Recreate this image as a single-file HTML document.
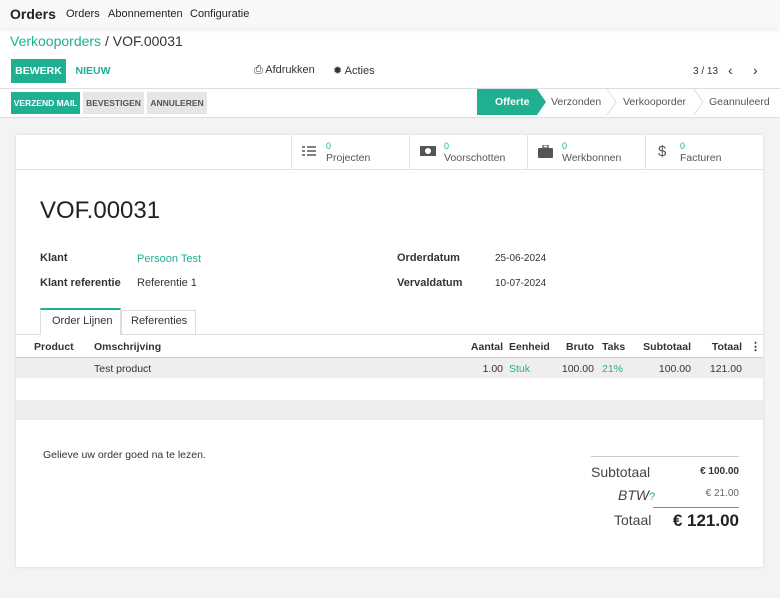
<!DOCTYPE html>
<html><head><meta charset="utf-8"><style>
*{box-sizing:border-box;margin:0;padding:0}
body{width:780px;height:598px;background:#f3f3f3;font-family:"Liberation Sans",sans-serif;font-size:11px;color:#333;position:relative;overflow:hidden}
.a{position:absolute;white-space:nowrap}
.r{position:absolute;white-space:nowrap;text-align:right}
.teal{color:#1fb092}
.nav{position:absolute;left:0;top:0;width:780px;height:28px;background:#f8f8f8;box-shadow:0 2px 4px rgba(0,0,0,.08);z-index:2}
.cp{position:absolute;left:0;top:28px;width:780px;height:90px;background:#fff;border-bottom:1px solid #ddd}
.btn{position:absolute;font-size:9.5px;font-weight:bold;height:22px;line-height:22px;text-align:center}
.sheet{position:absolute;left:16px;top:135px;width:747px;height:432px;background:#fff;box-shadow:0 0 3px rgba(0,0,0,.12)}
.sb{position:absolute;top:0;height:34px;border-left:1px solid #e2e2e2;width:118px}
.sb .n{position:absolute;left:34px;top:6px;font-size:9px;color:#1fb092}
.sb .l{position:absolute;left:34px;top:17px;font-size:10.5px;color:#555}
.sb svg{position:absolute;left:10px;top:10px}
.t{font-size:10.5px}
</style></head><body>
<div class="nav">
<span class="a" style="left:10px;top:6px;font-size:14px;font-weight:bold;color:#222">Orders</span>
<span class="a" style="left:66px;top:8px;font-size:11px;color:#222">Orders</span>
<span class="a" style="left:108px;top:8px;font-size:11px;color:#222">Abonnementen</span>
<span class="a" style="left:190px;top:8px;font-size:11px;color:#222">Configuratie</span>
</div>
<div class="cp">
<span class="a" style="left:10px;top:5px;font-size:14px"><span class="teal">Verkooporders</span> / VOF.00031</span>
<div class="btn" style="left:11px;top:31px;width:55px;height:24px;line-height:24px;background:#1fb092;color:#fff;font-size:10.5px">BEWERK</div>
<div class="btn" style="left:70px;top:31px;width:46px;height:24px;line-height:24px;color:#1fb092;font-size:10.5px">NIEUW</div>
<span class="a" style="left:254px;top:36px;font-size:11px">⎙ Afdrukken</span>
<span class="a" style="left:333px;top:36px;font-size:11px">✹ Acties</span>
<span class="a" style="left:693px;top:38px;font-size:10px">3 / 13</span>
<span class="a" style="left:728px;top:34px;font-size:14px">‹</span>
<span class="a" style="left:753px;top:34px;font-size:14px">›</span>
<div style="position:absolute;left:0;top:60px;width:780px;border-top:1px solid #ddd"></div>
<div class="btn" style="left:11px;top:64px;width:69px;background:#1fb092;color:#fff;font-size:8.5px">VERZEND MAIL</div>
<div class="btn" style="left:83px;top:64px;width:61px;background:#e6e6e6;color:#555;font-size:8.5px">BEVESTIGEN</div>
<div class="btn" style="left:147px;top:64px;width:60px;background:#e6e6e6;color:#555;font-size:8.5px">ANNULEREN</div>
<svg class="a" style="left:477px;top:61px" width="303" height="27"><polygon points="0,0 60,0 69,13 60,26 0,26" fill="#1fb092"/><polyline points="130,0 139,13 130,26" fill="none" stroke="#ddd"/><polyline points="217,0 226,13 217,26" fill="none" stroke="#ddd"/></svg>
<span class="a" style="left:495px;top:68px;color:#fff;font-weight:bold;font-size:10.5px">Offerte</span>
<span class="a" style="left:551px;top:68px;color:#555;font-size:10.5px">Verzonden</span>
<span class="a" style="left:623px;top:68px;color:#555;font-size:10.5px">Verkooporder</span>
<span class="a" style="left:709px;top:68px;color:#555;font-size:10.5px">Geannuleerd</span>
</div>
<div class="sheet">
<div style="position:absolute;left:0;top:34px;width:747px;border-top:1px solid #e2e2e2"></div>
<div class="sb" style="left:275px"><svg width="14" height="12"><path d="M0 2h3M0 6h3M0 10h3M5 2h9M5 6h9M5 10h9" stroke="#555" stroke-width="1.5"/></svg><span class="n">0</span><span class="l">Projecten</span></div>
<div class="sb" style="left:393px"><svg width="16" height="12"><rect x="0" y="1" width="16" height="10" fill="#555"/><circle cx="8" cy="6" r="3" fill="#fff"/></svg><span class="n">0</span><span class="l">Voorschotten</span></div>
<div class="sb" style="left:511px"><svg width="15" height="13"><rect x="5" y="0" width="5" height="3" fill="none" stroke="#555" stroke-width="1.3"/><rect x="0" y="3" width="15" height="10" rx="1" fill="#555"/></svg><span class="n">0</span><span class="l">Werkbonnen</span></div>
<div class="sb" style="left:629px"><span class="a" style="left:12px;top:8px;font-size:15px;color:#555">$</span><span class="n">0</span><span class="l">Facturen</span></div>
<span class="a" style="left:24px;top:62px;font-size:24px;color:#222">VOF.00031</span>
<span class="a" style="left:24px;top:117px;font-weight:bold">Klant</span>
<span class="a teal" style="left:121px;top:118px">Persoon Test</span>
<span class="a" style="left:24px;top:142px;font-weight:bold">Klant referentie</span>
<span class="a" style="left:121px;top:142px">Referentie 1</span>
<span class="a" style="left:381px;top:117px;font-weight:bold">Orderdatum</span>
<span class="a" style="left:479px;top:118px;font-size:10px">25-06-2024</span>
<span class="a" style="left:381px;top:142px;font-weight:bold">Vervaldatum</span>
<span class="a" style="left:479px;top:143px;font-size:10px">10-07-2024</span>
<div style="position:absolute;left:24px;top:173px;width:81px;height:27px;border:1px solid #ddd;border-top:2px solid #1fb092;border-bottom:none;background:#fff;z-index:1"></div>
<span class="a" style="left:36px;top:180px;z-index:2">Order Lijnen</span>
<div style="position:absolute;left:105px;top:175px;width:75px;height:24px;border:1px solid #ddd;border-bottom:none"></div>
<span class="a" style="left:115px;top:180px">Referenties</span>
<div style="position:absolute;left:0;top:199px;width:747px;border-top:1px solid #ddd"></div>
<div style="position:absolute;left:0;top:222px;width:747px;height:21px;background:#eee;border-top:1px solid #ccc"></div>
<div style="position:absolute;left:0;top:265px;width:747px;height:20px;background:#eee"></div>
<span class="a t" style="left:18px;top:206px;font-weight:bold">Product</span>
<span class="a t" style="left:78px;top:206px;font-weight:bold">Omschrijving</span>
<span class="r t" style="right:260px;top:206px;font-weight:bold">Aantal</span>
<span class="a t" style="left:493px;top:206px;font-weight:bold">Eenheid</span>
<span class="r t" style="right:169px;top:206px;font-weight:bold">Bruto</span>
<span class="a t" style="left:586px;top:206px;font-weight:bold">Taks</span>
<span class="r t" style="right:72px;top:206px;font-weight:bold">Subtotaal</span>
<span class="r t" style="right:21px;top:206px;font-weight:bold">Totaal</span>
<span class="a" style="left:734px;top:205px;font-weight:bold">⋮</span>
<span class="a t" style="left:78px;top:228px">Test product</span>
<span class="r t" style="right:260px;top:228px">1.00</span>
<span class="a t teal" style="left:493px;top:228px">Stuk</span>
<span class="r t" style="right:169px;top:228px">100.00</span>
<span class="a t teal" style="left:586px;top:228px">21%</span>
<span class="r t" style="right:72px;top:228px">100.00</span>
<span class="r t" style="right:21px;top:228px">121.00</span>
<span class="a t" style="left:27px;top:314px">Gelieve uw order goed na te lezen.</span>
<div style="position:absolute;left:575px;top:321px;width:148px;border-top:1px solid #ccc"></div>
<span class="a" style="left:575px;top:329px;font-size:14px;color:#444">Subtotaal</span>
<span class="r" style="right:24px;top:331px;font-size:10px;font-weight:bold">€ 100.00</span>
<span class="a" style="left:602px;top:352px;font-size:14px;font-style:italic;color:#444">BTW<span class="teal" style="font-size:11px;font-style:normal">?</span></span>
<span class="r" style="right:24px;top:353px;font-size:10px;color:#666">€ 21.00</span>
<div style="position:absolute;left:637px;top:372px;width:86px;border-top:1px solid #888"></div>
<span class="a" style="left:598px;top:377px;font-size:14px;color:#444">Totaal</span>
<span class="r" style="right:24px;top:376px;font-size:17px;font-weight:bold;color:#222">€ 121.00</span>
</div>
</body></html>
